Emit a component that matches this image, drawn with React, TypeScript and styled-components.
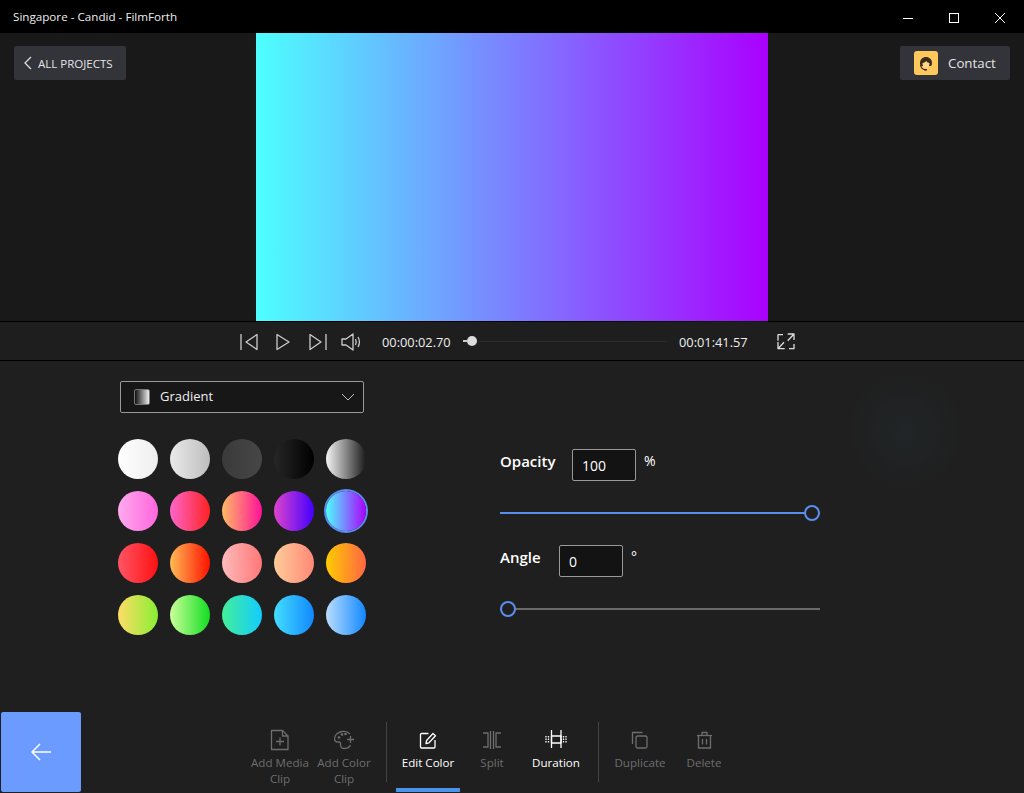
import React from 'react';
import styled, {createGlobalStyle} from 'styled-components';

const GlobalStyle = createGlobalStyle`
    html, body {
        margin: 0;
        padding: 0;
        background: #1e1e1e;
    }
    body {
        font-family: "Open Sans", "Noto Sans", sans-serif;
        color: #fff;
    }
`

const SWATCHES = [
    {g: '#ffffff, #eeeeee'},
    {g: '#eaeaea, #bdbdbd'},
    {g: '#3a3a3a, #474747'},
    {g: '#262626, #000000'},
    {g: '#f5f5f5, #1a1a1a'},
    {g: '#ffaaee, #ff66dd'},
    {g: '#ff66cc, #ff2222'},
    {g: '#ffbb66, #ff1199'},
    {g: '#dd44cc, #4400ff'},
    {g: '#4dffff, #aa00ff', active: true},
    {g: '#ff5566, #ff1111'},
    {g: '#ffbb55, #ff1100'},
    {g: '#ffbbbb, #ff7777'},
    {g: '#ffcc99, #ff8877'},
    {g: '#ffcc00, #ff6644'},
    {g: '#ffdd66, #88ee33'},
    {g: '#ccff99, #11dd22'},
    {g: '#44ee99, #11ccff'},
    {g: '#44ddff, #1188ff'},
    {g: '#bbddff, #1188ff'},
];

const Icon = ({children}: { children: React.ReactNode }) => (
    <svg width={22} height={22} viewBox="0 0 22 22" fill="none" stroke="currentColor" strokeWidth="1.3" strokeLinejoin="round" style={{flex: 'none'}}>
        {children}
    </svg>
);

const TOOLS = [
    {
        label: 'Add Media Clip', off: true,
        icon: <><path d="M2.500 1.500h11l5.500 5.500v13.500h-16.500z"/><path d="M13.500 1.500v5.500h5.500"/><path d="M7 12.500h8M11 8.500v8"/></>,
    },
    {
        label: 'Add Color Clip', off: true,
        icon: <><path d="M17 5c-2-2-5-3-8-2.500-4 .7-7.500 3.500-7.500 7.500 0 2.500 2 3 4 3 2.500 0 2 1.500 2 3 0 2 1.500 3.500 4 3.500 3 0 5-1.500 6-3.500"/><circle cx="6" cy="8.500" r=".7"/><circle cx="9" cy="5.500" r=".7"/><circle cx="12.500" cy="5" r=".7"/><path d="M14 10.500h7M17.500 7v7"/></>,
    },
    {
        label: 'Edit Color', sep: true, selected: true,
        icon: <><path d="M11.500 4.500H4.500q-1 0-1 1v12.500q0 1 1 1h12.500q1 0 1-1V11"/><path d="M9 14.500l.6-3 6.400-7 2.500 2.300-6.500 7z"/></>,
    },
    {
        label: 'Split', off: true,
        icon: <><path d="M2 4h5v14H2M20 4h-5v14h5"/><path d="M9.500 2v18M12.500 2v18"/></>,
    },
    {
        label: 'Duration',
        icon: <><rect x="6.500" y="7" width="9.500" height="7"/><path d="M6.500 1v18M16 1v18"/><path d="M1 7v7M3.500 7v7M18.500 7v7M21 7v7" strokeDasharray="1.500 1"/></>,
    },
    {
        label: 'Duplicate', sep: true, off: true,
        icon: <><path d="M3.500 15V3.500h10"/><rect x="7" y="7" width="11" height="12" rx="1.500"/></>,
    },
    {
        label: 'Delete', off: true,
        icon: <><path d="M4 6.500h15"/><path d="M9 6.500V3.500h5v3"/><path d="M5.500 6.500V19h12V6.500"/><path d="M9.500 10v5.500M13.500 10v5.500"/></>,
    },
];

export default function App() {
    return (
        <Window>
            <GlobalStyle/>
            <TitleBar>
                <Title>Singapore - Candid - FilmForth</Title>
                <WinButtons>
                    <WinButton>
                        <svg width="12" height="12"><path d="M1 7.500h10" stroke="#fff"/></svg>
                    </WinButton>
                    <WinButton>
                        <svg width="12" height="12"><rect x="1.500" y="2.500" width="9" height="9" fill="none" stroke="#fff"/></svg>
                    </WinButton>
                    <WinButton>
                        <svg width="12" height="12"><path d="M1 2l10 10M11 2L1 12" stroke="#fff"/></svg>
                    </WinButton>
                </WinButtons>
            </TitleBar>

            <Preview>
                <PreviewSide>
                    <GhostButton>
                        <svg width="10" height="14" viewBox="0 0 10 14" fill="none" stroke="#ddd" strokeWidth="1.300">
                            <path d="M8 1L2 7l6 6"/>
                        </svg>
                        <span>ALL PROJECTS</span>
                    </GhostButton>
                </PreviewSide>
                <Canvas/>
                <PreviewSide $right>
                    <ContactButton>
                        <Avatar>
                            <svg width="24" height="24" viewBox="0 0 24 24">
                                <path d="M6 12c0-3.500 2.700-6 6-6s6 2.500 6 6c0 1-.3 2-.8 3H6.800C6.300 14 6 13 6 12z" fill="#3a2c1c"/>
                                <path d="M8.500 12c1.500 0 2.700-.7 3.700-2 .8 1.300 2 2 3.300 2 0 3-1.500 5.500-3.500 5.500s-3.500-2.500-3.500-5.500z" fill="#ffd98a"/>
                                <path d="M6.500 14c.5 3 2.500 4.500 5 4.800" fill="none" stroke="#3a2c1c" strokeWidth="1.200"/>
                                <path d="M10.500 18h2.500v1.500h-2.500z" fill="#3a2c1c"/>
                            </svg>
                        </Avatar>
                        <span>Contact</span>
                    </ContactButton>
                </PreviewSide>
            </Preview>

            <Transport>
                <TransportIcons>
                    <Icon>
                        <path d="M3 4v16M19 4.500v15L8 12z"/>
                    </Icon>
                    <Icon>
                        <path d="M5 4.500v15L17 12z"/>
                    </Icon>
                    <Icon>
                        <path d="M20 4v16M4 4.500v15L15 12z"/>
                    </Icon>
                    <Icon>
                        <path d="M2 9v6h4l7 5V4L6 9z"/><path d="M15.500 9c1 2 1 4 0 6M18 7c1.700 3 1.700 7 0 10"/>
                    </Icon>
                </TransportIcons>
                <Time>00:00:02.70</Time>
                <Seek>
                    <SeekFill/>
                    <SeekThumb/>
                </Seek>
                <Time>00:01:41.57</Time>
                <FullScreen>
                    <Icon>
                        <path d="M6 4.700H1V10.700M17 14v4.700h-5"/>
                        <path d="M10.700 4H17v6M17 4l-6.300 6.700M1 12v6.700h6.700M1 18.700l6-6.500"/>
                    </Icon>
                </FullScreen>
            </Transport>

            <Editor>
                <Panels>
                    <LeftPanel>
                        <Select>
                            <SelectSwatch/>
                            <SelectLabel>Gradient</SelectLabel>
                            <svg width="14" height="8" viewBox="0 0 14 8" fill="none" stroke="#bbb">
                                <path d="M1 1l6 6 6-6"/>
                            </svg>
                        </Select>
                        <SwatchGrid>
                            {SWATCHES.map(s => <Swatch key={s.g} $g={s.g} $active={s.active}/>)}
                        </SwatchGrid>
                    </LeftPanel>
                    <RightPanel>
                        <FieldRow>
                            <FieldLabel $width={72}>Opacity</FieldLabel>
                            <NumberBox>100</NumberBox>
                            <Unit>%</Unit>
                        </FieldRow>
                        <Slider $value={100}/>
                        <FieldRow>
                            <FieldLabel $width={59}>Angle</FieldLabel>
                            <NumberBox>0</NumberBox>
                            <Unit>°</Unit>
                        </FieldRow>
                        <Slider $value={0}/>
                    </RightPanel>
                </Panels>
                <BottomRow>
                    <BackButton>
                        <svg width="22" height="18" viewBox="0 0 22 18" fill="none" stroke="#fff" strokeWidth="1.500">
                            <path d="M21 9H2M10 1L2 9l8 8"/>
                        </svg>
                    </BackButton>
                    <Toolbar>
                        {TOOLS.map(t => (
                            <React.Fragment key={t.label}>
                                {t.sep && <ToolSep/>}
                                <Tool $off={t.off} $selected={t.selected}>
                                    <Icon>{t.icon}</Icon>
                                    <ToolLabel>{t.label}</ToolLabel>
                                </Tool>
                            </React.Fragment>
                        ))}
                    </Toolbar>
                </BottomRow>
            </Editor>
        </Window>
    );
}

const Window = styled.div`
    width: 1024px;
    height: 793px;
    display: flex;
    flex-direction: column;
    overflow: hidden;
    background: #1e1e1e;
`
const TitleBar = styled.div`
    height: 33px;
    flex: none;
    background: #000;
    display: flex;
    align-items: center;
    justify-content: space-between;
`
const Title = styled.div`
    font-size: 11.650px;
    padding: 0 0 1px 13px;
    color: #eee;
`
const WinButtons = styled.div`
    display: flex;
    padding-right: 1px;
`
const WinButton = styled.div`
    width: 46px;
    height: 32px;
    display: flex;
    align-items: center;
    justify-content: center;
`
const Preview = styled.div`
    height: 288px;
    flex: none;
    display: grid;
    grid-template-columns: 256px 512px 256px;
    background: #191919;
    border-bottom: 1px solid #000;
`
const PreviewSide = styled.div<{ $right?: boolean }>`
    display: flex;
    align-items: flex-start;
    padding: 13px 14px;
    justify-content: ${p => p.$right ? 'flex-end' : 'flex-start'};
`
const Canvas = styled.div`
    background: linear-gradient(90deg, #4dffff, #aa00ff);
`
const GhostButton = styled.div`
    width: 112px;
    height: 34px;
    box-sizing: border-box;
    border-radius: 2px;
    background: #33333a;
    display: flex;
    align-items: center;
    gap: 5px;
    padding-left: 9px;
    font-size: 11.500px;
    color: #e4e4e4;
`
const ContactButton = styled(GhostButton)`
    width: 110px;
    gap: 10px;
    padding-left: 14px;
    font-size: 13.300px;
`
const Avatar = styled.div`
    width: 24px;
    height: 24px;
    border-radius: 3px;
    background: #ffc85c;
    overflow: hidden;
`
const Transport = styled.div`
    height: 38px;
    flex: none;
    display: flex;
    align-items: center;
    background: #1e1e1e;
    border-bottom: 1px solid #000;
    padding-left: 238px;
`
const TransportIcons = styled.div`
    display: flex;
    gap: 12px;
    color: #ccc;
    margin-right: 20px;
`
const Time = styled.div`
    font-size: 12.800px;
    color: #eee;
    width: 70px;
    padding-top: 1px;
`
const Seek = styled.div`
    width: 204px;
    height: 1px;
    margin: 0 12px 0 11px;
    background: #2b2b2b;
    display: flex;
    align-items: center;
`
const SeekFill = styled.div`
    width: 4px;
    height: 2px;
    background: #ccc;
`
const SeekThumb = styled.div`
    width: 10px;
    height: 10px;
    border-radius: 50%;
    background: #ddd;
`
const FullScreen = styled.div`
    color: #ddd;
    margin-left: 28px;
    display: flex;
`
const Editor = styled.div`
    flex: 1;
    display: flex;
    flex-direction: column;
    justify-content: space-between;
    background: radial-gradient(circle at 905px 70px, #212527 0, #1f1f1f 60px), #1f1f1f;
`
const Panels = styled.div`
    display: flex;
    padding: 20px 0 0 118px;
`
const LeftPanel = styled.div`
    width: 248px;
`
const Select = styled.div`
    width: 244px;
    height: 32px;
    margin-left: 2px;
    box-sizing: border-box;
    border: 1px solid #999;
    border-radius: 2px;
    background: #171717;
    display: flex;
    align-items: center;
    padding: 0 8px 0 13px;
    font-size: 13px;
    color: #eee;
`
const SelectSwatch = styled.div`
    width: 16px;
    height: 16px;
    box-sizing: border-box;
    border: 1px solid #777;
    border-radius: 2px;
    background: linear-gradient(90deg, #111, #eee);
`
const SelectLabel = styled.span`
    flex: 1;
    margin-left: 10px;
    padding-bottom: 2px;
`
const SwatchGrid = styled.div`
    margin-top: 26px;
    display: grid;
    grid-template-columns: repeat(5, 40px);
    gap: 12px;
`
const Swatch = styled.div<{ $g: string, $active?: boolean }>`
    width: 40px;
    height: 40px;
    border-radius: 50%;
    background: linear-gradient(90deg, ${p => p.$g});
    box-shadow: ${p => p.$active ? '0 0 0 2px #5b8def' : 'none'};
`
const RightPanel = styled.div`
    width: 320px;
    margin-left: 134px;
    padding-top: 68px;
`
const FieldRow = styled.div`
    display: flex;
    align-items: flex-start;
    height: 32px;
`
const FieldLabel = styled.div<{ $width: number }>`
    width: ${p => p.$width}px;
    font-size: 15px;
    font-weight: 600;
    line-height: 24px;
`
const NumberBox = styled.div`
    width: 64px;
    height: 32px;
    box-sizing: border-box;
    border: 1px solid #999;
    border-radius: 2px;
    background: #131313;
    font-size: 14px;
    line-height: 32px;
    padding-left: 9px;
`
const Unit = styled.div`
    font-size: 14px;
    line-height: 24px;
    margin-left: 8px;
`
const Slider = styled.div<{ $value: number }>`
    position: relative;
    height: 2px;
    margin: 31px 0 31px;
    background: ${p => p.$value > 0 ? '#5b8def' : '#6a6a6a'};
    &::after {
        content: '';
        position: absolute;
        top: -7px;
        left: ${p => p.$value > 0 ? 'calc(100% - 16px)' : '0'};
        width: 12px;
        height: 12px;
        border: 2px solid #5b8def;
        border-radius: 50%;
        background: #1f1f1f;
    }
`
const BottomRow = styled.div`
    display: flex;
    align-items: flex-end;
    height: 81px;
    padding-left: 1px;
`
const BackButton = styled.div`
    width: 80px;
    height: 80px;
    margin-bottom: 1px;
    background: #6b9bff;
    border-radius: 2px;
    display: flex;
    align-items: center;
    justify-content: center;
`
const Toolbar = styled.div`
    display: flex;
    margin-left: 167px;
    height: 81px;
    align-items: flex-start;
`
const ToolSep = styled.div`
    width: 1px;
    height: 60px;
    margin: 10px 9px 0 10px;
    background: #444;
`
const Tool = styled.div<{ $off?: boolean, $selected?: boolean }>`
    width: 64px;
    height: 80px;
    box-sizing: border-box;
    padding-top: 17px;
    display: flex;
    flex-direction: column;
    align-items: center;
    color: ${p => p.$off ? '#6e6e6e' : '#fff'};
    border-bottom: 4px solid ${p => p.$selected ? '#4a94f0' : 'transparent'};
`
const ToolLabel = styled.div`
    font-size: 11.600px;
    line-height: 16px;
    text-align: center;
    margin-top: 4px;
`
